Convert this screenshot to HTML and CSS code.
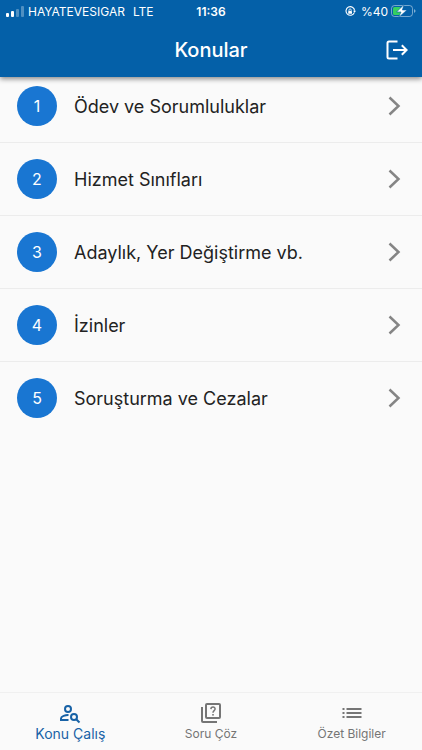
FILE: index.html
```html
<!DOCTYPE html>
<html lang="tr">
<head>
    <meta charset="UTF-8">
    <meta name="viewport" content="width=device-width, initial-scale=1.0">
    <title>Konular</title>
    <link rel="stylesheet" href="styles.css">
</head>
<body>
    <header class="app-header">
        <div class="status-bar">
            <div class="status-left">
                <svg width="18" height="11" viewBox="0 0 18 11" fill="#fff">
                    <rect x="0" y="7" width="3" height="4" rx="1"/>
                    <rect x="5" y="5" width="3" height="6" rx="1"/>
                    <rect x="10" y="3" width="3" height="8" rx="1" opacity="0.3"/>
                    <rect x="15" y="0" width="3" height="11" rx="1" opacity="0.3"/>
                </svg>
                <span>HAYATEVESIGAR</span>
                <span class="network">LTE</span>
            </div>
            <span class="clock">11:36</span>
            <div class="status-right">
                <svg class="rotation-lock" width="11" height="11" viewBox="0 0 11 11" fill="none" stroke="#fff">
                    <path d="M9.3 6.6A4.3 4.3 0 1 1 9.6 4.6" stroke-width="1.1"/>
                    <path d="M8 4.7h3L9.6 6.8z" fill="#fff" stroke="none"/>
                    <rect x="3.2" y="5" width="3.8" height="2.8" rx="0.4" fill="#fff" stroke="none"/>
                    <path d="M4 5V4a1.1 1.1 0 0 1 2.2 0v1" stroke-width="0.8"/>
                </svg>
                <span>%40</span>
                <svg width="25" height="14" viewBox="0 0 25 14">
                    <rect x="0.5" y="1.5" width="21" height="11" rx="3" fill="none" stroke="#fff" stroke-opacity="0.45"/>
                    <rect x="2" y="3" width="8" height="8" rx="1.5" fill="#35d060"/>
                    <path d="M23 5.200v3.500c1-.3 1.500-1 1.500-1.750S24 5.500 23 5.200z" fill="#fff" opacity="0.5"/>
                    <path d="M13 0.500L5.600 8h4.400L7.600 13.500L16 6h-4.600z" fill="#fff" stroke="#0460a8" stroke-width="0.6"/>
                </svg>
            </div>
        </div>
        <div class="toolbar">
            <h1>Konular</h1>
            <button type="button" class="logout" aria-label="Çıkış">
                <svg width="22" height="20" viewBox="0 0 22 20" fill="none" stroke="#fff" stroke-width="2">
                    <path d="M11.500 1.500H3Q1.500 1.500 1.500 3V17Q1.500 18.500 3 18.500H11.500"/>
                    <path d="M7 10H20.500M15.800 5.200L20.600 10L15.800 14.800"/>
                </svg>
            </button>
        </div>
    </header>

    <main>
        <ul class="topics">
            <li><a href="#konu-1">
                <span class="number">1</span>
                <span class="name">Ödev ve Sorumluluklar</span>
                <svg class="arrow" width="14" height="22" viewBox="0 0 14 22"><path d="M2.500 2.500L11.500 11L2.500 19.500"/></svg>
            </a></li>
            <li><a href="#konu-2">
                <span class="number">2</span>
                <span class="name">Hizmet Sınıfları</span>
                <svg class="arrow" width="14" height="22" viewBox="0 0 14 22"><path d="M2.500 2.500L11.500 11L2.500 19.500"/></svg>
            </a></li>
            <li><a href="#konu-3">
                <span class="number">3</span>
                <span class="name">Adaylık, Yer Değiştirme vb.</span>
                <svg class="arrow" width="14" height="22" viewBox="0 0 14 22"><path d="M2.500 2.500L11.500 11L2.500 19.500"/></svg>
            </a></li>
            <li><a href="#konu-4">
                <span class="number">4</span>
                <span class="name">İzinler</span>
                <svg class="arrow" width="14" height="22" viewBox="0 0 14 22"><path d="M2.500 2.500L11.500 11L2.500 19.500"/></svg>
            </a></li>
            <li><a href="#konu-5">
                <span class="number">5</span>
                <span class="name">Soruşturma ve Cezalar</span>
                <svg class="arrow" width="14" height="22" viewBox="0 0 14 22"><path d="M2.500 2.500L11.500 11L2.500 19.500"/></svg>
            </a></li>
        </ul>
    </main>

    <nav class="bottom-nav">
        <a href="#konu-calis" class="active">
            <svg width="24" height="24" viewBox="0 0 24 24" fill="none" stroke="currentColor" stroke-width="2">
                <circle cx="10" cy="8" r="3"/>
                <path d="M10.500 14C7.500 13.900 3 15.300 3 17.400V19H10.500"/>
                <circle cx="16" cy="16" r="3"/>
                <path d="M18.200 18.200L21.500 21.500"/>
            </svg>
            <span>Konu Çalış</span>
        </a>
        <a href="#soru-coz">
            <svg width="24" height="24" viewBox="0 0 24 24" fill="none" stroke="currentColor" stroke-width="2">
                <rect x="7" y="3" width="14" height="14" rx="1"/>
                <path d="M3 6V20Q3 21 4 21H18"/>
                <path d="M11.900 8.100C12 5.200 16.200 5.300 16.100 8C16 9.700 14 9.600 14 11.800" stroke-width="1.500"/>
                <rect x="13.200" y="13" width="1.600" height="1.600" fill="currentColor" stroke="none"/>
            </svg>
            <span>Soru Çöz</span>
        </a>
        <a href="#ozet-bilgiler">
            <svg width="24" height="24" viewBox="0 0 24 24" fill="currentColor">
                <path d="M2.500 7h2v2h-2zM6.500 7h15v2h-15zM2.500 11h2v2h-2zM6.500 11h15v2h-15zM2.500 15h2v2h-2zM6.500 15h15v2h-15z"/>
            </svg>
            <span>Özet Bilgiler</span>
        </a>
    </nav>
</body>
</html>
```
FILE: styles.css
```css
body {
    font-family: Inter, "Noto Sans", sans-serif;
    margin: 0;
    min-height: 100vh;
    display: flex;
    flex-direction: column;
    background-color: #fafafa;
    color: #222;
}
.app-header {
    background-color: #0460a8;
    color: white;
    box-shadow: 0 2px 5px rgba(0,0,0,0.45);
}
.status-bar {
    display: grid;
    grid-template-columns: 1fr auto 1fr;
    align-items: center;
    height: 22px;
    padding: 0 6px;
    font-size: 12px;
}
.status-left, .status-right {
    display: flex;
    align-items: center;
    gap: 4px;
}
.status-right {
    justify-content: flex-end;
    gap: 3px;
}
.rotation-lock {
    margin-right: 2px;
}
.network {
    margin-left: 4px;
}
.clock {
    font-weight: 600;
}
.toolbar {
    display: grid;
    grid-template-columns: 1fr auto 1fr;
    align-items: center;
    height: 55px;
    padding: 0 14px;
}
.toolbar h1 {
    grid-column: 2;
    margin: 0;
    font-size: 20px;
    font-weight: 500;
}
.logout {
    justify-self: end;
    display: flex;
    padding: 0;
    border: none;
    background: none;
    cursor: pointer;
}
main {
    flex: 1;
}
.topics {
    list-style: none;
    margin: 0;
    padding: 0;
}
.topics a {
    display: flex;
    align-items: center;
    padding: 16px 21px 16px 17px;
    color: inherit;
    text-decoration: none;
}
.topics li:first-child a {
    padding-top: 9px;
}
.topics li + li {
    border-top: 1px solid #ececec;
}
.number {
    display: flex;
    align-items: center;
    justify-content: center;
    width: 40px;
    height: 40px;
    border-radius: 50%;
    background-color: #1976d2;
    color: white;
    font-size: 16px;
}
.name {
    flex: 1;
    margin-left: 17px;
    font-size: 18px;
}
.arrow {
    fill: none;
    stroke: #858585;
    stroke-width: 2.5;
}
.bottom-nav {
    display: grid;
    grid-template-columns: repeat(3, 1fr);
    height: 57px;
    border-top: 1px solid #f0f0f0;
}
.bottom-nav a {
    display: flex;
    flex-direction: column;
    align-items: center;
    padding-top: 8px;
    color: #757575;
    font-size: 12px;
    line-height: 18px;
    text-decoration: none;
}
.bottom-nav .active {
    color: #1862a6;
    font-size: 14px;
}
```
